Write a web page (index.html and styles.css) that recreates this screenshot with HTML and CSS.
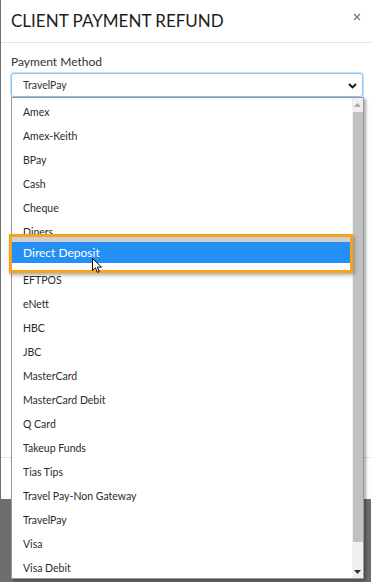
FILE: index.html
```html
<!DOCTYPE html>
<html>
<head>
<meta charset="utf-8">
<link rel="stylesheet" href="styles.css">
</head>
<body>
<div class="modal">
  <div class="modal-header">
    <h1 class="title">CLIENT PAYMENT REFUND</h1>
    <svg class="close" width="8" height="8" viewBox="0 0 8 8"><path d="M1 1L7 7M7 1L1 7" stroke="#777" stroke-width="1.3"/></svg>
  </div>
  <div class="modal-body">
    <div class="label">Payment Method</div>
    <div class="select">
      <span>TravelPay</span>
      <svg class="chev" width="9" height="6" viewBox="0 0 9 6"><path d="M1 1L4.5 4.5L8 1" fill="none" stroke="#111" stroke-width="1.8"/></svg>
    </div>
  </div>
  <div class="modal-footer"></div>

  <div class="dropdown">
    <ul class="options">
      <li>Amex</li>
      <li>Amex-Keith</li>
      <li>BPay</li>
      <li>Cash</li>
      <li>Cheque</li>
      <li>Diners</li>
      <li>Direct Deposit</li>
      <li>EFTPOS</li>
      <li>eNett</li>
      <li>HBC</li>
      <li>JBC</li>
      <li>MasterCard</li>
      <li>MasterCard Debit</li>
      <li>Q Card</li>
      <li>Takeup Funds</li>
      <li>Tias Tips</li>
      <li>Travel Pay-Non Gateway</li>
      <li>TravelPay</li>
      <li>Visa</li>
      <li>Visa Debit</li>
    </ul>
    <div class="scrollbar">
      <svg class="arrow" width="7" height="4" viewBox="0 0 7 4"><path d="M0 4L3.5 0L7 4Z" fill="#a8a8a8"/></svg>
      <div class="thumb"></div>
      <svg class="arrow down" width="7" height="4" viewBox="0 0 7 4"><path d="M0 0L3.5 4L7 0Z" fill="#333"/></svg>
    </div>
  </div>

  <div class="callout">
    <div class="callout-top"></div>
    <div class="callout-row">Direct Deposit</div>
    <div class="callout-bottom"></div>
  </div>
  <svg class="cursor" width="11" height="16" viewBox="0 0 11 16"><path d="M0.5 0.5L0.5 12.5L3.4 9.8L5.3 14.3L7.2 13.5L5.4 9.1L9.5 9.1Z" fill="#fff" stroke="#000" stroke-width="1" stroke-linejoin="round"/></svg>
</div>
</body>
</html>
```

FILE: styles.css
```css
* { box-sizing: border-box; }
html, body { margin: 0; padding: 0; }
body {
  background: #6e6e6e;
  width: 371px;
  height: 582px;
  overflow: hidden;
  font-family: Lato, "Noto Sans", sans-serif;
  color: #222;
}
.modal {
  position: relative;
  margin-left: 1px;
  width: 370px;
  height: 499px;
  background: #fff;
}
.modal-header {
  height: 43px;
  border-bottom: 1px solid #e3e3e3;
  display: flex;
  align-items: center;
  justify-content: space-between;
  padding: 0 10px 2px 10px;
}
.title {
  margin: 0;
  font-size: 17px;
  font-weight: 400;
  color: #1d1d1d;
}
.close { margin-top: -6px; }
.modal-body {
  padding: 11px 8px 0 10px;
}
.label {
  font-size: 12px;
  color: #333;
  line-height: 16px;
  margin-bottom: 3px;
}
.select {
  height: 24px;
  border: 1px solid #8cc3f5;
  box-shadow: 0 0 0 1px #c4dffa;
  border-radius: 3px;
  display: flex;
  align-items: center;
  justify-content: space-between;
  padding: 0 5px 0 11px;
  font-size: 10.5px;
  color: #333;
}
.chev { margin-top: 1px; }
.modal-footer {
  position: absolute;
  left: 0; right: 0;
  top: 457px;
  border-top: 1px solid #e3e3e3;
}
.dropdown {
  position: absolute;
  left: 10px;
  top: 97px;
  width: 353px;
  height: 482px;
  background: #fff;
  border: 1px solid #9a9a9a;
  box-shadow: 2px 2px 3px rgba(0,0,0,0.35);
  display: flex;
}
.options {
  list-style: none;
  margin: 0;
  padding: 2px 0 0 0;
  flex: 1;
}
.options li {
  height: 24px;
  line-height: 24px;
  padding-left: 11px;
  font-size: 10.5px;
  color: #2b2b2b;
  white-space: nowrap;
}
.scrollbar {
  width: 11px;
  background: #f0f0f0;
  display: flex;
  flex-direction: column;
  align-items: center;
  padding: 5px 0 4px;
}
.arrow { flex: none; }
.thumb {
  width: 10px;
  margin: 5px 0 28px;
  height: 431px;
  background: #c1c1c1;
}
.down { margin-top: auto; }
.callout {
  position: absolute;
  left: 8px;
  top: 234px;
  width: 344px;
  height: 39px;
  border: 3px solid #f5a51c;
  box-shadow: 1px 2px 4px rgba(0,0,0,0.35);
  display: flex;
  flex-direction: column;
  background: #fff;
}
.callout-top {
  height: 5px;
  background: #cfcfcf;
}
.callout-row {
  height: 21px;
  line-height: 21px;
  background: #2490f5;
  color: #fff;
  font-size: 12px;
  padding-left: 11px;
}
.callout-bottom { flex: 1; background: #fff; }
.cursor {
  position: absolute;
  left: 91px;
  top: 258px;
}
```
